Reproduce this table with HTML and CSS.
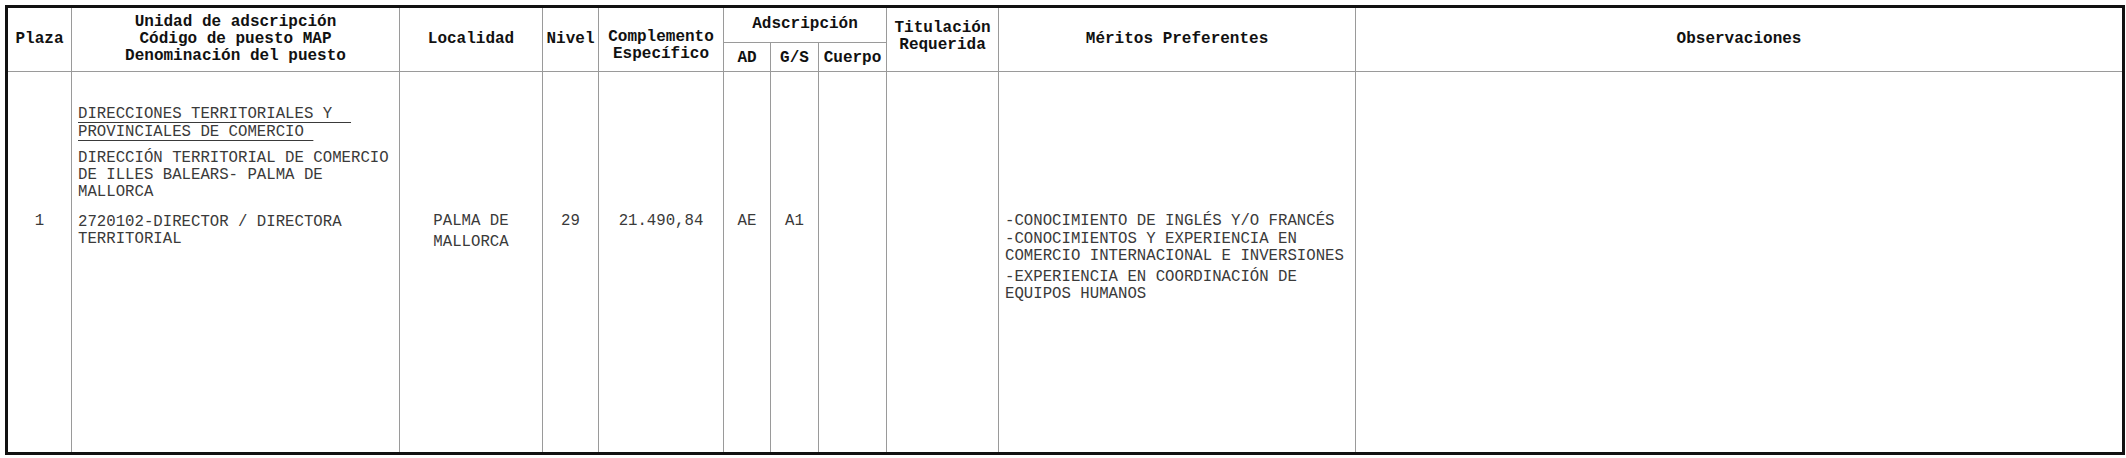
FILE: index.html
```html
<!DOCTYPE html>
<html lang="es">
<head>
<meta charset="utf-8">
<title>Plaza</title>
<link rel="stylesheet" href="styles.css">
</head>
<body>
<table class="grid">
  <colgroup>
    <col class="c-plaza">
    <col class="c-unidad">
    <col class="c-loc">
    <col class="c-nivel">
    <col class="c-comp">
    <col class="c-ad">
    <col class="c-gs">
    <col class="c-cuerpo">
    <col class="c-tit">
    <col class="c-mer">
    <col class="c-obs">
  </colgroup>
  <thead>
    <tr class="h1">
      <th rowspan="2">Plaza</th>
      <th rowspan="2">Unidad de adscripción<br>Código de puesto MAP<br>Denominación del puesto</th>
      <th rowspan="2">Localidad</th>
      <th rowspan="2">Nivel</th>
      <th rowspan="2" class="h-comp">Complemento<br>Específico</th>
      <th colspan="3" class="h-ads">Adscripción</th>
      <th rowspan="2" class="h-tit">Titulación<br>Requerida</th>
      <th rowspan="2">Méritos Preferentes</th>
      <th rowspan="2">Observaciones</th>
    </tr>
    <tr class="h2">
      <th>AD</th>
      <th>G/S</th>
      <th>Cuerpo</th>
    </tr>
  </thead>
  <tbody>
    <tr class="body">
      <td class="center">1</td>
      <td class="unidad">
        <p class="u"><span class="ul">DIRECCIONES TERRITORIALES Y&nbsp;&nbsp;</span><br><span class="ul">PROVINCIALES DE COMERCIO&nbsp;</span></p>
        <p class="d">DIRECCIÓN TERRITORIAL DE COMERCIO DE ILLES BALEARS- PALMA DE MALLORCA</p>
        <p class="c">2720102-DIRECTOR / DIRECTORA TERRITORIAL</p>
      </td>
      <td class="center loc">PALMA DE<br>MALLORCA</td>
      <td class="center">29</td>
      <td class="center">21.490,84</td>
      <td class="center">AE</td>
      <td class="center">A1</td>
      <td></td>
      <td></td>
      <td class="meritos">
        <p>-CONOCIMIENTO DE INGLÉS Y/O FRANCÉS</p>
        <p class="m2">-CONOCIMIENTOS Y EXPERIENCIA EN COMERCIO INTERNACIONAL E INVERSIONES</p>
        <p class="m3">-EXPERIENCIA EN COORDINACIÓN DE EQUIPOS HUMANOS</p>
      </td>
      <td></td>
    </tr>
  </tbody>
</table>
</body>
</html>
```
FILE: styles.css
```css
html, body {
  margin: 0;
  padding: 0;
  background: #ffffff;
}
body {
  padding: 5px 0 0 5px;
  font-family: "Liberation Mono", "Courier New", monospace;
}
.grid {
  border-collapse: collapse;
  table-layout: fixed;
  width: 2117px;
  border: 3px solid #111111;
}
.c-plaza { width: 65px; }
.c-unidad { width: 328px; }
.c-loc { width: 143px; }
.c-nivel { width: 56px; }
.c-comp { width: 125px; }
.c-ad { width: 47px; }
.c-gs { width: 48px; }
.c-cuerpo { width: 68px; }
.c-tit { width: 112px; }
.c-mer { width: 357px; }
.c-obs { width: 768px; }

th, td {
  border: 1px solid #9a9a9a;
  padding: 0 5px;
  overflow: hidden;
}
th {
  font-size: 16px;
  line-height: 17px;
  font-weight: bold;
  color: #111111;
  text-align: center;
  vertical-align: middle;
  white-space: nowrap;
  padding: 0;
}
.h1 { height: 36px; }
.h2 { height: 29px; }
.h2 th { padding-top: 2px; }
.h-comp { padding-top: 12px; }
.h-tit { padding-bottom: 6px; }
.h-ads { padding-bottom: 2px; }

td {
  font-size: 15.7px;
  line-height: 17px;
  color: #3a3a3a;
  vertical-align: top;
  padding-top: 141px;
}
.body { height: 382px; }
td.center { text-align: center; }
td.loc { line-height: 21px; padding-top: 139px; }
td p { margin: 0; }
td.unidad {
  padding: 33px 2px 0 6px;
}
td.unidad p.d { margin-top: 9px; }
td.unidad p.c { margin-top: 13px; }
td.unidad p.u { line-height: 18px; }
.ul {
  text-decoration: underline;
  text-underline-offset: 4px;
  text-decoration-thickness: 1px;
}
td.meritos { padding-left: 6px; padding-right: 2px; }
td.meritos p.m2 { margin-top: 1px; }
td.meritos p.m3 { margin-top: 4px; }
```
